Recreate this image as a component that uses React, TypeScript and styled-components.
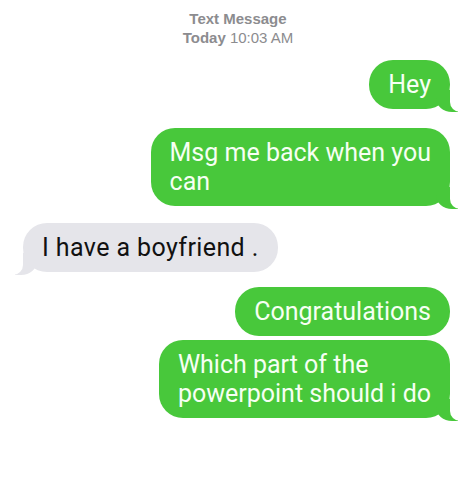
import styled, { createGlobalStyle, css } from "styled-components"

type Side = "me" | "them";

interface Message {
    side: Side;
    lines: string[];
    tail: boolean;
    gap: number;
}

const messages: Message[] = [
    { side: "me", lines: ["Hey"], tail: true, gap: 13 },
    { side: "me", lines: ["Msg me back when you", "can"], tail: true, gap: 19 },
    { side: "them", lines: ["I have a boyfriend ."], tail: true, gap: 17 },
    { side: "me", lines: ["Congratulations"], tail: false, gap: 15 },
    { side: "me", lines: ["Which part of the", "powerpoint should i do"], tail: true, gap: 4 },
]

const GREEN = "#48c83b"
const GRAY = "#e5e5ea"

const App = () => {
    return <>
        <GlobalStyle />
        <Screen>
            <Header>
                <HeaderTitle>Text Message</HeaderTitle>
                <HeaderTime><b>Today</b> 10:03 AM</HeaderTime>
            </Header>
            <Thread>
                {messages.map((m, i) => (
                    <Bubble key={i} $side={m.side} $tail={m.tail} $gap={m.gap}>
                        {m.lines.map((line, j) => (
                            <Line key={j}>{line}</Line>
                        ))}
                    </Bubble>
                ))}
            </Thread>
        </Screen>
    </>
}

const GlobalStyle = createGlobalStyle`
    html, body {
        margin: 0;
        padding: 0;
        background: #ffffff;
    }
    body {
        font-family: Roboto, "Liberation Sans", Arial, sans-serif;
    }
`

const Screen = styled.div`
    width: 476px;
    height: 477px;
    background: #ffffff;
    overflow: hidden;
`

const Header = styled.div`
    padding-top: 9px;
    display: flex;
    flex-direction: column;
    align-items: center;
    color: #8c8c8f;
    font-family: "Liberation Sans", Arial, sans-serif;
    font-size: 15px;
    line-height: 19px;
`

const HeaderTitle = styled.div`
    font-weight: 700;
`

const HeaderTime = styled.div`
    font-weight: 400;

    b {
        font-weight: 700;
    }
`

const Thread = styled.div`
    display: flex;
    flex-direction: column;
    padding: 0 26px 0 23px;
`

const meTail = css`
    &::before {
        content: "";
        position: absolute;
        bottom: -3px;
        right: -8px;
        width: 22px;
        height: 22px;
        background: ${GREEN};
        border-bottom-left-radius: 16px 14px;
    }
    &::after {
        content: "";
        position: absolute;
        bottom: -3px;
        right: -26px;
        width: 26px;
        height: 24px;
        background: #ffffff;
        border-bottom-left-radius: 10px;
    }
`

const themTail = css`
    &::before {
        content: "";
        position: absolute;
        bottom: -3px;
        left: -8px;
        width: 22px;
        height: 22px;
        background: ${GRAY};
        border-bottom-right-radius: 16px 14px;
    }
    &::after {
        content: "";
        position: absolute;
        bottom: -3px;
        left: -26px;
        width: 26px;
        height: 24px;
        background: #ffffff;
        border-bottom-right-radius: 10px;
    }
`

const Bubble = styled.div<{ $side: Side; $tail: boolean; $gap: number }>`
    position: relative;
    margin-top: ${p => p.$gap}px;
    align-self: ${p => p.$side === "me" ? "flex-end" : "flex-start"};
    padding: 10px 19px;
    border-radius: 24px;
    background: ${p => p.$side === "me" ? GREEN : GRAY};
    color: ${p => p.$side === "me" ? "#f6fff3" : "#111111"};
    font-size: 25px;
    line-height: 29px;
    letter-spacing: ${p => p.$side === "me" ? "0" : "0.4px"};
    white-space: nowrap;
    ${p => p.$tail && (p.$side === "me" ? meTail : themTail)}
`

const Line = styled.div`
    position: relative;
    z-index: 1;
`

export default App
